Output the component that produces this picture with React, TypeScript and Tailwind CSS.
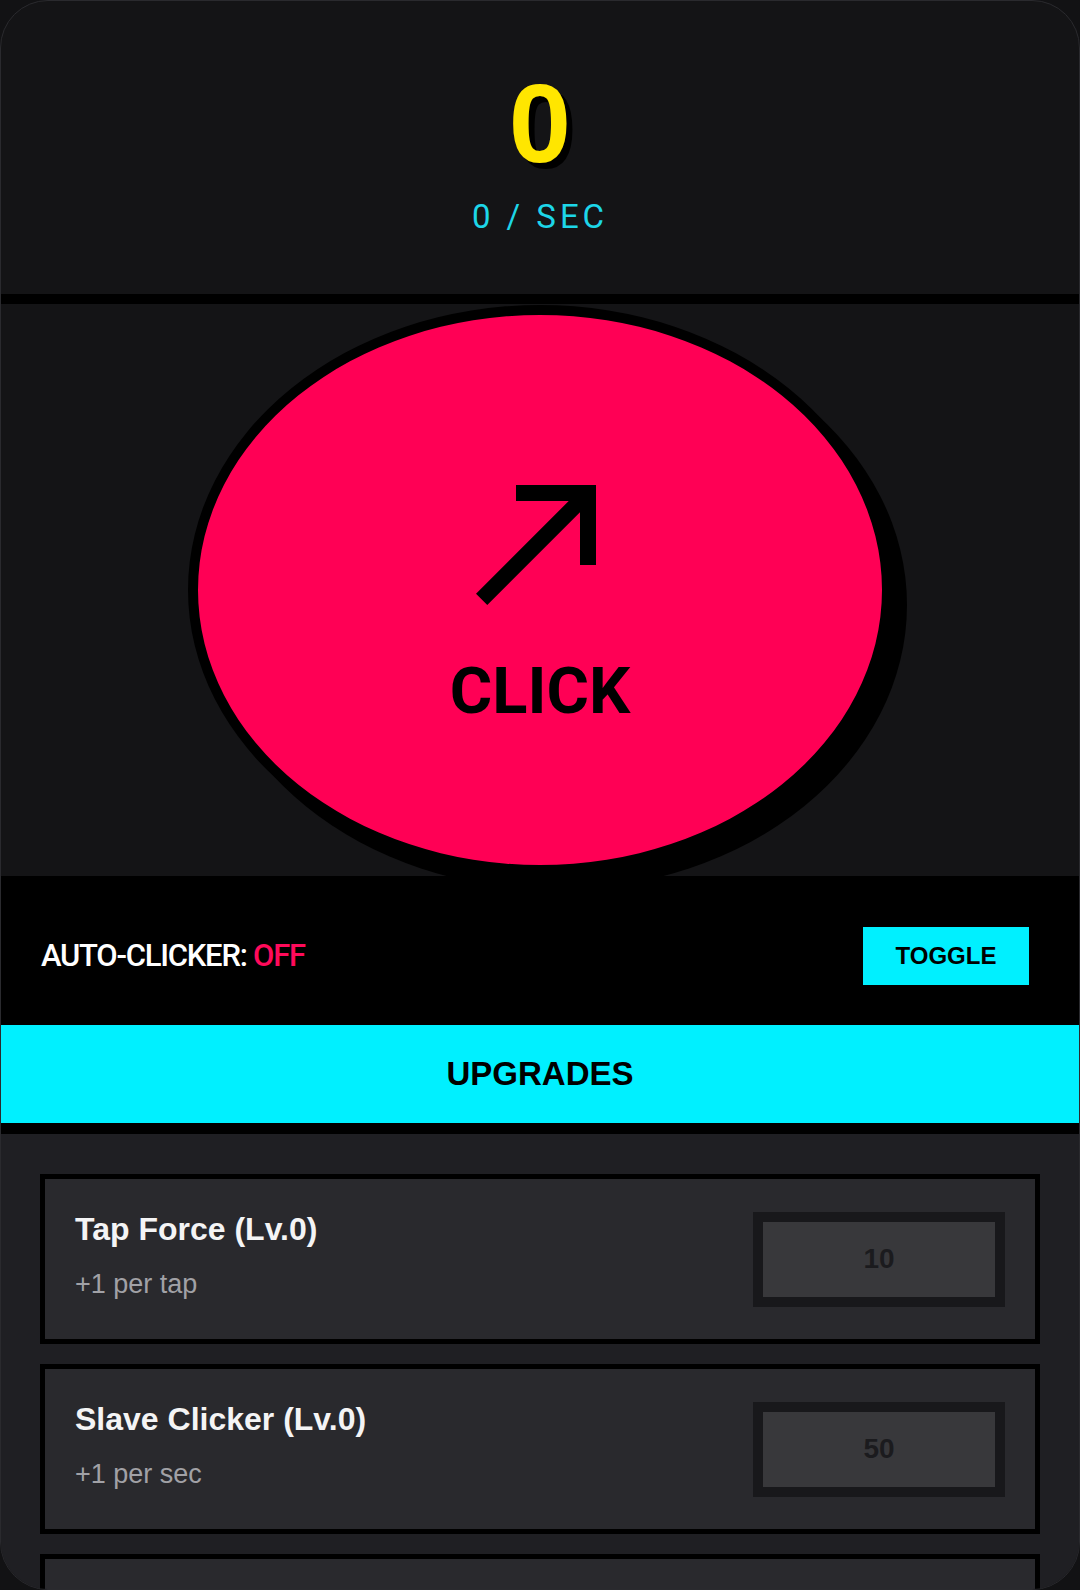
const upgrades = [
  { name: 'Tap Force', level: 0, effect: '+1 per tap', cost: 10 },
  { name: 'Slave Clicker', level: 0, effect: '+1 per sec', cost: 50 },
  { name: 'Click Storm', level: 0, effect: '+5 per tap', cost: 250 },
];

function ArrowNorthEast() {
  return (
    <svg className="h-[192px] w-[192px]" viewBox="0 0 24 24" fill="#000">
      <path d="M9 5v2h6.59L4 18.59 5.41 20 17 8.41V15h2V5z" />
    </svg>
  );
}

export default function App() {
  return (
    <div className="min-h-screen bg-[#121214] font-['Liberation_Sans',Arial,sans-serif]">
      <div className="flex h-[1590px] w-[1080px] flex-col overflow-hidden rounded-[48px] border border-[#2a2a2e] bg-[#141416]">
        {/* score */}
        <header className="flex shrink-0 flex-col items-center border-b-[10px] border-black pt-[67px] pb-[61px]">
          <div className="text-[112px] font-bold leading-none text-[#ffe600] [text-shadow:6px_6px_0_#000]">0</div>
          <div className="mt-[20px] font-['Roboto',sans-serif] text-[33px] leading-none tracking-[0.12em] text-[#1dd6e8]">
            0 / SEC
          </div>
        </header>

        {/* big button */}
        <section className="flex h-[572px] shrink-0 items-center justify-center bg-[#141416]">
          <button className="flex h-[570px] w-[704px] flex-col items-center justify-center rounded-[50%] border-[10px] border-black bg-[#ff0055] pb-3 shadow-[15px_15px_0_#000]">
            <ArrowNorthEast />
            <span className="mt-[22px] font-['Roboto',sans-serif] text-[65px] font-bold leading-none text-black">CLICK</span>
          </button>
        </section>

        {/* auto clicker */}
        <div className="flex h-[149px] shrink-0 items-center justify-between bg-black pt-[11px] pr-[50px] pl-[40px]">
          <div className="font-['Roboto',sans-serif] text-[31px] font-medium tracking-[-0.04em] text-white">
            AUTO-CLICKER: <span className="text-[#ff0a5a]">OFF</span>
          </div>
          <button className="h-[58px] w-[166px] bg-[#00f0ff] text-[24px] font-bold text-black">TOGGLE</button>
        </div>

        <div className="flex h-[109px] shrink-0 items-center justify-center border-b-[11px] border-black bg-[#00f0ff] text-[33px] font-bold text-black">
          UPGRADES
        </div>

        {/* upgrade list */}
        <div className="flex flex-1 flex-col gap-[20px] bg-[#1f1f23] px-[39px] pt-[40px]">
          {upgrades.map((u) => (
            <div
              key={u.name}
              className="flex h-[170px] shrink-0 items-center justify-between border-[5px] border-black bg-[#29292d] px-[30px]"
            >
              <div className="mb-2 flex flex-col">
                <span className="text-[32px] font-bold leading-[36px] text-[#f4f4f5]">
                  {u.name} (Lv.{u.level})
                </span>
                <span className="mt-[22px] text-[27px] leading-[30px] text-[#a1a1a6]">{u.effect}</span>
              </div>
              <button className="flex h-[95px] w-[252px] items-center justify-center border-[10px] border-[#18181b] bg-[#38383b] text-[28px] font-bold text-[#1b1b1e]">
                {u.cost}
              </button>
            </div>
          ))}
        </div>
      </div>
    </div>
  );
}
